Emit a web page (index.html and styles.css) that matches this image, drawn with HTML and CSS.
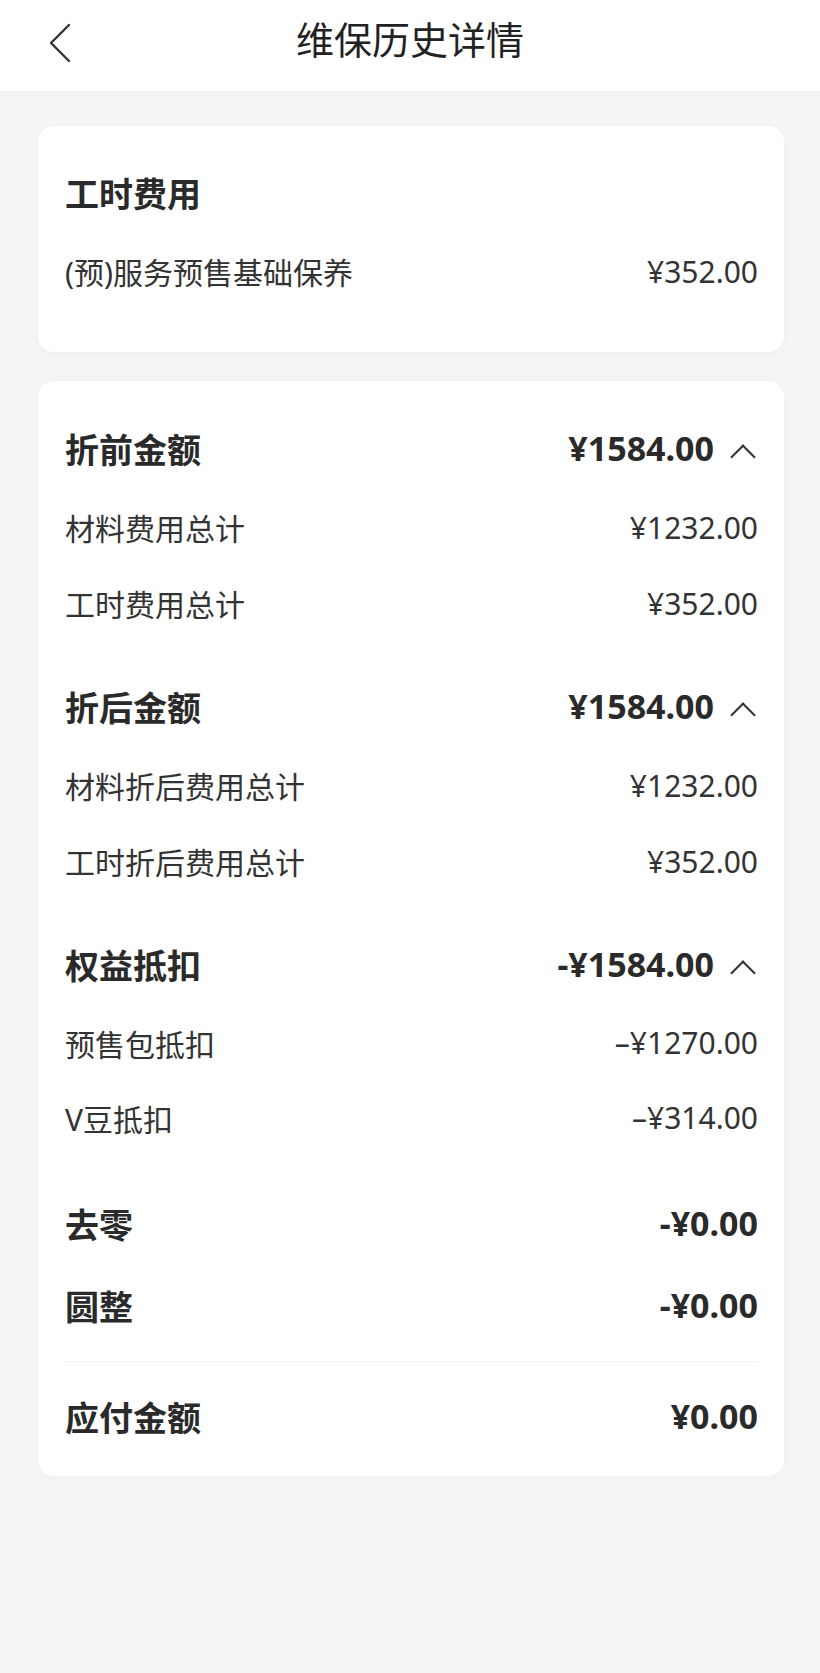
FILE: index.html
```html
<!DOCTYPE html>
<html lang="zh-CN">
<head>
  <meta charset="UTF-8"/>
  <title>维保历史详情</title>
  <link rel="stylesheet" href="styles.css">
</head>
<body>
<header class="topbar">
  <a class="back" href="#">
    <svg width="24" height="40" viewBox="0 0 24 40"><polyline points="21,2 3,20 21,38" fill="none" stroke="#333" stroke-width="2.4" stroke-linecap="round" stroke-linejoin="round"/></svg>
  </a>
  <h1>维保历史详情</h1>
</header>

<main class="page">
  <section class="card card-hours">
    <div class="row head">
      <span>工时费用</span>
    </div>
    <div class="row sub first">
      <span>(预)服务预售基础保养</span>
      <span>¥352.00</span>
    </div>
  </section>

  <section class="card card-total">
    <div class="group">
      <div class="row head">
        <span>折前金额</span>
        <span class="amount">¥1584.00 <i class="arrow"></i></span>
      </div>
      <div class="row sub first"><span>材料费用总计</span><span>¥1232.00</span></div>
      <div class="row sub"><span>工时费用总计</span><span>¥352.00</span></div>
    </div>

    <div class="group">
      <div class="row head">
        <span>折后金额</span>
        <span class="amount">¥1584.00 <i class="arrow"></i></span>
      </div>
      <div class="row sub first"><span>材料折后费用总计</span><span>¥1232.00</span></div>
      <div class="row sub"><span>工时折后费用总计</span><span>¥352.00</span></div>
    </div>

    <div class="group">
      <div class="row head">
        <span>权益抵扣</span>
        <span class="amount">-¥1584.00 <i class="arrow"></i></span>
      </div>
      <div class="row sub first short"><span>预售包抵扣</span><span>–¥1270.00</span></div>
      <div class="row sub short"><span>V豆抵扣</span><span>–¥314.00</span></div>
    </div>

    <div class="row head zero"><span>去零</span><span>-¥0.00</span></div>
    <div class="row head round"><span>圆整</span><span>-¥0.00</span></div>
    <hr class="divider">
    <div class="row head"><span>应付金额</span><span>¥0.00</span></div>
  </section>
</main>
</body>
</html>
```

FILE: styles.css
```css
html, body {
  margin: 0;
  padding: 0;
  background: #f4f5f7;
  min-height: 1673px;
  font-family: "Noto Sans", "Noto Sans CJK SC", sans-serif;
  color: #2e2e2e;
}

.topbar {
  height: 91px;
  background: #fff;
  display: flex;
  align-items: center;
  justify-content: center;
  position: relative;
  box-shadow: 0 4px 8px rgba(0, 0, 0, 0.02);
}
.topbar h1 {
  margin: 0;
  font-size: 38px;
  font-weight: 400;
  color: #222;
  padding-bottom: 16px;
}
.back {
  position: absolute;
  left: 48px;
  top: 23px;
  display: block;
  line-height: 0;
}

.page {
  padding: 35px 36px 0 38px;
}

.card {
  background: #fff;
  border-radius: 16px;
  padding: 42px 26px 43px 27px;
  box-shadow: 0 2px 10px rgba(40, 50, 70, 0.03);
}
.card + .card { margin-top: 29px; }
.card-total { padding-top: 43px; padding-bottom: 36px; }

.row {
  display: flex;
  justify-content: space-between;
  align-items: center;
}
.row.head {
  height: 48px;
  font-size: 34px;
  font-weight: 700;
  color: #2a2a2a;
}
.row.sub {
  height: 76px;
  font-size: 30px;
  color: #333;
}
.row.sub.short { height: 75px; }
.row.sub.first { margin-top: 17px; }
.group + .group { margin-top: 41px; }
.row.zero { margin-top: 44px; }
.row.round { margin-top: 34px; }

.amount {
  display: flex;
  align-items: center;
}
.arrow {
  display: inline-block;
  width: 16px;
  height: 16px;
  border-left: 2.5px solid #333;
  border-top: 2.5px solid #333;
  transform: rotate(45deg);
  margin: 18px 6px 0 20px;
}

.divider {
  border: 0;
  border-top: 1.5px solid #f0f1f3;
  margin: 32px 0 30px;
}
```
